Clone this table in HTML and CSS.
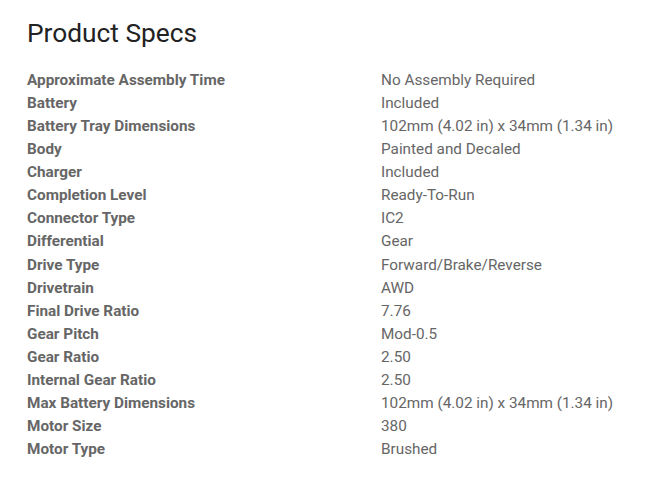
FILE: index.html
```html
<!DOCTYPE html>
<html>
<head>
<meta charset="utf-8">
<link rel="stylesheet" href="styles.css">
</head>
<body>
<div class="specs">
  <h2 class="title">Product Specs</h2>
  <dl class="grid">
    <dt>Approximate Assembly Time</dt><dd>No Assembly Required</dd>
    <dt>Battery</dt><dd>Included</dd>
    <dt>Battery Tray Dimensions</dt><dd>102mm (4.02 in) x 34mm (1.34 in)</dd>
    <dt>Body</dt><dd>Painted and Decaled</dd>
    <dt>Charger</dt><dd>Included</dd>
    <dt>Completion Level</dt><dd>Ready-To-Run</dd>
    <dt>Connector Type</dt><dd>IC2</dd>
    <dt>Differential</dt><dd>Gear</dd>
    <dt>Drive Type</dt><dd>Forward/Brake/Reverse</dd>
    <dt>Drivetrain</dt><dd>AWD</dd>
    <dt>Final Drive Ratio</dt><dd>7.76</dd>
    <dt>Gear Pitch</dt><dd>Mod-0.5</dd>
    <dt>Gear Ratio</dt><dd>2.50</dd>
    <dt>Internal Gear Ratio</dt><dd>2.50</dd>
    <dt>Max Battery Dimensions</dt><dd>102mm (4.02 in) x 34mm (1.34 in)</dd>
    <dt>Motor Size</dt><dd>380</dd>
    <dt>Motor Type</dt><dd>Brushed</dd>
  </dl>
</div>
</body>
</html>
```
FILE: styles.css
```css
html, body {
  margin: 0;
  padding: 0;
  background: #fff;
}
body {
  font-family: Roboto, "Liberation Sans", sans-serif;
}
.specs {
  padding: 18px 27px 0 27px;
}
.title {
  margin: 0;
  font-size: 26.3px;
  font-weight: 400;
  line-height: 30px;
  color: #222;
}
.grid {
  display: grid;
  grid-template-columns: 354px 1fr;
  margin: 21px 0 0 0;
}
.grid dt, .grid dd {
  margin: 0;
  font-size: 15.3px;
  line-height: 23.07px;
  color: #666;
}
.grid dt {
  font-weight: 700;
}
```
